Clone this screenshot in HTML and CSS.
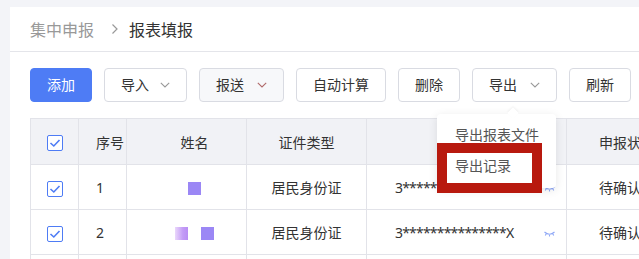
FILE: index.html
```html
<!DOCTYPE html>
<html lang="zh">
<head>
<meta charset="utf-8">
<link rel="stylesheet" href="styles.css">
</head>
<body>
<div class="page">
  <div class="panel">
    <div class="breadcrumb">
      <span class="crumb-muted">集中申报</span>
      <svg class="crumb-sep" width="8" height="12" viewBox="0 0 8 12"><path d="M1.5 1.5 L6 6 L1.5 10.5" fill="none" stroke="#999" stroke-width="1.2"/></svg>
      <span class="crumb-current">报表填报</span>
    </div>
    <div class="toolbar">
      <button class="btn btn-primary">添加</button>
      <button class="btn">导入<svg class="chev" width="10" height="6" viewBox="0 0 10 6"><path d="M0.8 0.8 L5 5 L9.2 0.8" fill="none" stroke="#999" stroke-width="1.1"/></svg></button>
      <button class="btn btn-hover">报送<svg class="chev" width="10" height="6" viewBox="0 0 10 6"><path d="M0.8 0.8 L5 5 L9.2 0.8" fill="none" stroke="#b06a6a" stroke-width="1.1"/></svg></button>
      <button class="btn btn-wide">自动计算</button>
      <button class="btn">删除</button>
      <button class="btn btn-export">导出<svg class="chev" width="10" height="6" viewBox="0 0 10 6"><path d="M0.8 0.8 L5 5 L9.2 0.8" fill="none" stroke="#999" stroke-width="1.1"/></svg></button>
      <button class="btn">刷新</button>
    </div>
    <table class="grid">
      <colgroup>
        <col class="c-check"><col class="c-no"><col class="c-name"><col class="c-type"><col class="c-id"><col class="c-status">
      </colgroup>
      <thead>
        <tr>
          <th class="t-check"><span class="checkbox"><svg width="12" height="10" viewBox="0 0 12 10"><path d="M1.5 5 L4.8 8 L10.5 2" fill="none" stroke="#4e7cf5" stroke-width="1.6"/></svg></span></th>
          <th class="t-no">序号</th>
          <th class="t-name">姓名</th>
          <th class="t-center">证件类型</th>
          <th class="t-center">证件号码</th>
          <th class="t-status">申报状态</th>
        </tr>
      </thead>
      <tbody>
        <tr>
          <td class="t-check"><span class="checkbox"><svg width="12" height="10" viewBox="0 0 12 10"><path d="M1.5 5 L4.8 8 L10.5 2" fill="none" stroke="#4e7cf5" stroke-width="1.6"/></svg></span></td>
          <td class="t-no">1</td>
          <td class="t-name"><span class="blur-name"><span class="sq"></span></span></td>
          <td class="t-center">居民身份证</td>
          <td class="t-id"><div class="id-cell"><span class="id-text">3***************X</span><svg class="eye" width="11" height="7" viewBox="0 0 11 7"><path d="M0.5 1 Q5.5 5.5 10.5 1 M2.2 2.8 L1.3 4.4 M5.5 3.9 L5.5 5.6 M8.8 2.8 L9.7 4.4" fill="none" stroke="#8fa8f6" stroke-width="1.1"/></svg></div></td>
          <td class="t-status">待确认</td>
        </tr>
        <tr>
          <td class="t-check"><span class="checkbox"><svg width="12" height="10" viewBox="0 0 12 10"><path d="M1.5 5 L4.8 8 L10.5 2" fill="none" stroke="#4e7cf5" stroke-width="1.6"/></svg></span></td>
          <td class="t-no">2</td>
          <td class="t-name"><span class="blur-name"><span class="sq sq-light"></span><span class="sq"></span></span></td>
          <td class="t-center">居民身份证</td>
          <td class="t-id"><div class="id-cell"><span class="id-text">3***************X</span><svg class="eye" width="11" height="7" viewBox="0 0 11 7"><path d="M0.5 1 Q5.5 5.5 10.5 1 M2.2 2.8 L1.3 4.4 M5.5 3.9 L5.5 5.6 M8.8 2.8 L9.7 4.4" fill="none" stroke="#8fa8f6" stroke-width="1.1"/></svg></div></td>
          <td class="t-status">待确认</td>
        </tr>
        <tr class="row-cut">
          <td></td><td></td><td></td><td></td><td></td><td></td>
        </tr>
      </tbody>
    </table>
  </div>

  <div class="dropdown">
    <div class="dd-item">导出报表文件</div>
    <div class="dd-item">导出记录</div>
  </div>
  <div class="highlight"></div>
</div>
</body>
</html>
```

FILE: styles.css
```css
html, body {
  margin: 0;
  padding: 0;
  background: #f3f4f8;
  overflow: hidden;
}
body {
  width: 639px;
  height: 259px;
  font-family: "Noto Sans", "Noto Sans CJK SC", sans-serif;
  color: #333;
}
.page {
  position: relative;
  width: 639px;
  height: 259px;
  overflow: hidden;
}
.panel {
  margin: 7px 0 0 10px;
  background: #fff;
  width: 700px;
  height: 300px;
}
.breadcrumb {
  display: flex;
  align-items: center;
  padding-left: 20px;
  font-size: 16px;
  box-sizing: border-box;
  height: 45px;
  border-bottom: 1px solid #e4e5ea;
}
.crumb-muted { color: #999; }
.crumb-sep { margin: 0 10px 0 17px; }
.crumb-current { color: #333; }

.toolbar {
  display: flex;
  gap: 12px;
  padding: 16px 0 0 20px;
  height: 33px;
}
.btn {
  height: 34px;
  box-sizing: border-box;
  border: 1px solid #d9dbe2;
  border-radius: 4px;
  background: #fff;
  font-family: inherit;
  font-size: 14px;
  color: #333;
  padding: 0 16px;
  display: flex;
  align-items: center;
  line-height: 1;
}
.btn-primary {
  background: #4e7cf5;
  border-color: #4e7cf5;
  color: #fff;
  width: 62px;
  justify-content: center;
}
.btn-hover { background: #f7f8fa; }
.chev { margin-left: 11px; }
.btn-hover .chev { margin-left: 13px; }
.btn-export .chev { margin-left: 13px; }

.grid {
  margin: 17px 0 0 20px;
  border-collapse: collapse;
  table-layout: fixed;
  width: 650px;
  font-size: 14px;
}
.c-check { width: 48px; }
.c-no { width: 48px; }
.c-name { width: 120px; }
.c-type { width: 120px; }
.c-id { width: 200px; }
.c-status { width: 114px; }

.grid th, .grid td {
  border: 1px solid #e2e3e9;
  padding: 0;
  font-weight: normal;
  color: #333;
  white-space: nowrap;
  overflow: hidden;
}
.grid thead th {
  background: #f1f2f6;
  height: 45px;
}
.grid tbody td { height: 44px; }
.grid tbody tr.row-cut td { height: 20px; }

.t-check { text-align: center; }
.t-no { text-align: left; padding-left: 17px !important; }
.t-name { text-align: center; padding-left: 16px !important; }
.t-center { text-align: center; }
.t-id { text-align: left; padding-left: 28px !important; }
.t-status { text-align: left; padding-left: 32px !important; }

.checkbox {
  display: inline-flex;
  width: 16px;
  height: 16px;
  box-sizing: border-box;
  border: 1px solid #4e7cf5;
  border-radius: 2px;
  background: #fff;
  align-items: center;
  justify-content: center;
  vertical-align: middle;
}
.blur-name {
  display: inline-flex;
  gap: 13px;
  vertical-align: middle;
}
.sq {
  width: 13px;
  height: 13px;
  background: #9b87f5;
}
.sq-light { background: linear-gradient(90deg, #ead7fb, #c39cf6 60%, #b98ef4); }

.id-cell {
  display: flex;
  align-items: center;
  justify-content: space-between;
  padding-right: 11px;
}
.id-text { letter-spacing: -0.8px; }
.eye { margin-top: 4px; }

.dropdown {
  position: absolute;
  left: 437px;
  top: 114px;
  width: 119px;
  height: 74px;
  background: #fff;
  border-radius: 4px;
  box-shadow: 0 2px 10px rgba(0, 0, 0, 0.1);
  padding-top: 5px;
  box-sizing: border-box;
}
.dropdown::before {
  content: "";
  position: absolute;
  left: 72px;
  top: -5px;
  width: 8px;
  height: 8px;
  background: #fff;
  transform: rotate(45deg);
  box-shadow: -1px -1px 2px rgba(0, 0, 0, 0.05);
}
.dd-item {
  position: relative;
  height: 31px;
  line-height: 31px;
  padding-left: 18px;
  font-size: 14px;
  color: #555;
}
.highlight {
  position: absolute;
  left: 437px;
  top: 143px;
  width: 105px;
  height: 50px;
  box-sizing: border-box;
  border: 10px solid #b8190e;
}
```
